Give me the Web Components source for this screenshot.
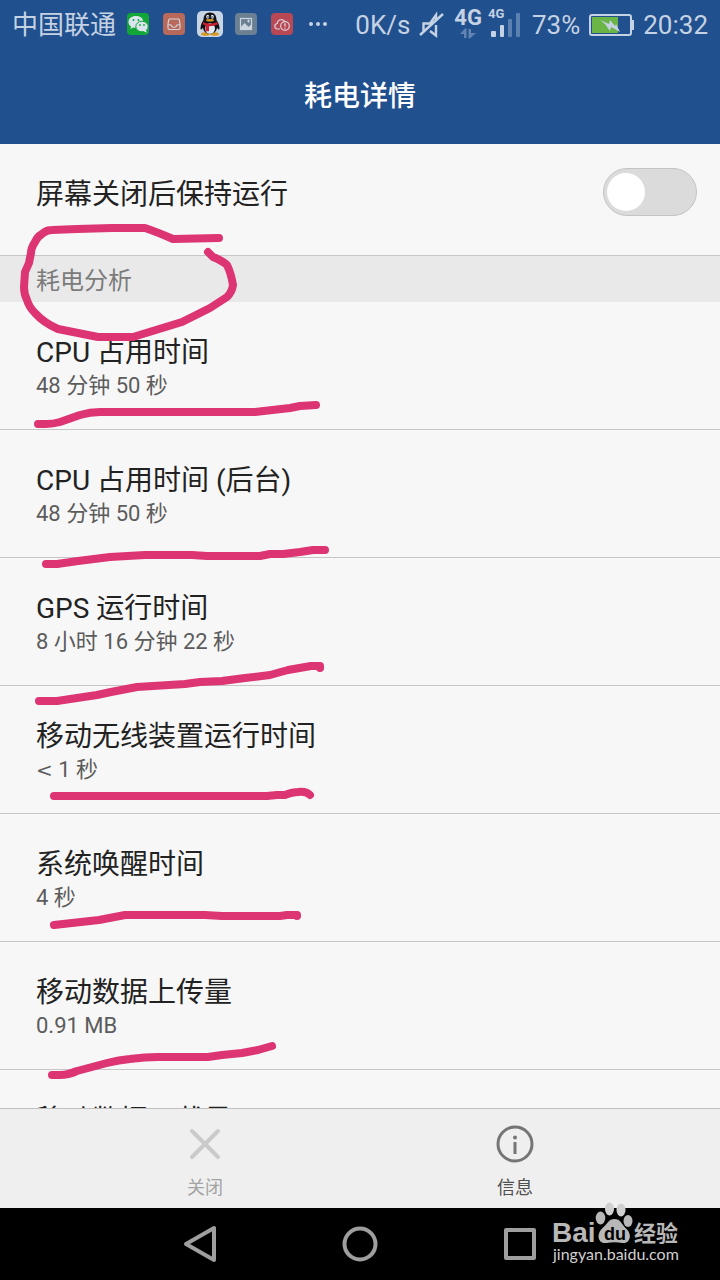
<!DOCTYPE html>
<html lang="zh-CN">
<head>
<meta charset="utf-8">
<meta name="viewport" content="width=device-width, initial-scale=1">
<title>耗电详情</title>
<style>
  html, body {
    margin: 0;
    height: 100%;
  }

  body {
    background: #f7f7f7;
    font-family: Roboto, "Noto Sans CJK SC", sans-serif;
    color: #222;
  }
</style>
</head>
<body>
<power-app></power-app>

<script>
class StatusBar extends HTMLElement {
  constructor() {
    super();
    this.attachShadow({ mode: "open" });
  }

  connectedCallback() {
    this.shadowRoot.innerHTML = `
      <style>
        :host {
          display: flex;
          align-items: center;
          justify-content: space-between;
          height: 46px;
          padding: 2px 12px 0;
          color: #c5d2e3;
          font-size: 26px;
          line-height: 46px;
          white-space: nowrap;
        }

        .left, .right {
          display: flex;
          align-items: center;
        }

        .right {
          gap: 9px;
        }

        .icons {
          display: flex;
          margin-left: 4px;
          padding-bottom: 2px;
        }

        svg {
          display: block;
        }

        .mobile {
          display: flex;
          align-items: center;
          gap: 6px;
          padding: 0 3px 4px 0;
        }

        .net {
          display: flex;
          flex-direction: column;
          align-items: center;
          font-size: 22px;
          font-weight: 700;
          line-height: 20px;
        }

        .signal {
          display: grid;
          font-size: 13px;
          font-weight: 700;
          line-height: 10px;
        }

        .signal > * {
          grid-area: 1 / 1;
        }
      </style>

      <div class="left">
        <span>中国联通</span>
        <div class="icons">
          <!-- WeChat -->
          <svg width="36" height="36" viewBox="0 0 36 36">
            <rect x="7" y="7" width="22" height="22" rx="4" fill="#12a537"/>
            <path d="M16 10c-4.500 0-7.500 2.600-7.500 6 0 2 1 3.500 2.700 4.600l-.8 2.500 3-1.500c4.500 1 10-1 10-5.600 0-3.400-3-6-7.400-6z" fill="#dbe5ee"/>
            <ellipse cx="22" cy="20.500" rx="6.200" ry="5.300" fill="#dbe5ee" stroke="#12a537"/>
            <path d="M23 25l3.800 1.800-.8-3z" fill="#dbe5ee"/>
            <g fill="#12a537"><circle cx="13.500" cy="14" r="1"/><circle cx="18.500" cy="14" r="1"/><circle cx="20" cy="19" r=".9"/><circle cx="24" cy="19" r=".9"/></g>
          </svg>
          <!-- Inbox -->
          <svg width="36" height="36" viewBox="0 0 36 36">
            <rect x="7" y="7" width="22" height="22" rx="4" fill="#b9695a"/>
            <path d="M14 13h8q1 0 1.300 1l.7 4v4q0 1.500-1.500 1.500h-9q-1.500 0-1.500-1.500v-4l.7-4q.3-1 1.300-1zM12 18.500l3 .5q1 2.500 3 2.500t3-2.500l3-.5" fill="none" stroke="#d3d3dc" stroke-width="1.200"/>
          </svg>
          <!-- QQ -->
          <svg width="36" height="36" viewBox="0 0 36 36">
            <rect x="5" y="5" width="26" height="26" rx="5" fill="#c8d5e4"/>
            <ellipse cx="13.500" cy="28" rx="4.500" ry="1.800" fill="#d99a22"/>
            <ellipse cx="22.500" cy="28" rx="4.500" ry="1.800" fill="#d99a22"/>
            <path d="M18 6.500c-4.500 0-6.500 3-6.500 7.500-1.500 2-3 5-3 8.500 0 2 1.500.8 2.500-.8.500 3.700 3 6 7 6s6.500-2.300 7-6c1 1.600 2.500 2.800 2.500.8 0-3.500-1.500-6.500-3-8.500 0-4.500-2-7.500-6.500-7.500z" fill="#101216"/>
            <ellipse cx="18" cy="22.500" rx="5" ry="5.200" fill="#e2e8ef"/>
            <ellipse cx="15.700" cy="10.800" rx="1.500" ry="2" fill="#e2e8ef"/>
            <ellipse cx="20.300" cy="10.800" rx="1.500" ry="2" fill="#e2e8ef"/>
            <circle cx="16" cy="11" r=".7"/><circle cx="20" cy="11" r=".7"/>
            <ellipse cx="18" cy="14.300" rx="4" ry="1.200" fill="#d99a22"/>
            <path d="M11 16q7 3.500 14 0l1 2.300q-4 2.200-9 2v5h-3.500v-6l-2.500-.8z" fill="#c92032"/>
          </svg>
          <!-- Picture -->
          <svg width="36" height="36" viewBox="0 0 36 36">
            <rect x="7" y="7" width="22" height="22" rx="4" fill="#6b8093"/>
            <rect x="12.500" y="12.500" width="11" height="11" fill="none" stroke="#ccd6e0" stroke-width="1.200"/>
            <path d="M13 21l3.500-4 4 4 2-2 1 1v4H13z" fill="#ccd6e0"/>
            <path d="M20.500 13.500v3M19 15h3" stroke="#ccd6e0"/>
          </svg>
          <!-- Cloud warning -->
          <svg width="36" height="36" viewBox="0 0 36 36">
            <rect x="7" y="7" width="22" height="22" rx="4" fill="#b94855"/>
            <path d="M16 23h-2.500c-3.500-.3-3.500-5-.3-5.500.2-4 6-5.500 8-1.500" fill="none" stroke="#dcd0da" stroke-width="1.200"/>
            <circle cx="21" cy="20" r="4.300" fill="#b94855" stroke="#dcd0da" stroke-width="1.200"/>
            <path d="M21 17.300v3.200M21 21.700v1" stroke="#dcd0da" stroke-width="1.400"/>
          </svg>
          <svg width="36" height="36" viewBox="0 0 36 36" fill="#c5d2e3">
            <circle cx="11" cy="18" r="2"/><circle cx="18" cy="18" r="2"/><circle cx="25" cy="18" r="2"/>
          </svg>
        </div>
      </div>

      <div class="right">
        <span>0K/s</span>
        <!-- Muted -->
        <svg width="26" height="28" viewBox="0 0 26 28" fill="none" stroke="#c5d2e3" stroke-width="2.400">
          <path d="M4.500 20v-7.500H11L17 4v5M11 20l6 4.500V14M1 24L24 3"/>
        </svg>
        <div class="mobile">
          <span class="net">4G
            <svg width="18" height="11" viewBox="0 0 18 11" fill="#6284b2">
              <path d="M1 6l5-5.500h1.500V10H5V6zM17 5l-6 5.500H9.500V1H12v4z"/>
            </svg>
          </span>
          <div class="signal">
            <span>4G</span>
            <svg width="32" height="28" viewBox="0 0 32 28" fill="#c5d2e3">
              <rect x="3" y="22" width="5" height="6" rx="1"/>
              <rect x="12" y="16" width="4" height="12" rx="1"/>
              <rect x="20" y="10" width="4" height="18" rx="1" fill="#5c80b0"/>
              <rect x="28" y="4" width="4" height="24" rx="1" fill="#5c80b0"/>
            </svg>
          </div>
        </div>
        <span>73%</span>
        <!-- Charging battery -->
        <svg width="45" height="24" viewBox="0 0 45 24">
          <rect x="1" y="2" width="41" height="20" rx="2" fill="none" stroke="#c5d2e3" stroke-width="2"/>
          <path d="M43 7h2v10h-2z" fill="#c5d2e3"/>
          <rect x="3" y="4" width="26" height="16" fill="#6ab546"/>
          <path d="M11 7l9 4 1-4 5 6 1-2 4 8-9-5-1 4-5-7z" fill="#c5d2e3"/>
        </svg>
        <span>20:32</span>
      </div>
    `;
  }
}

class PageHeader extends HTMLElement {
  constructor() {
    super();
    this.attachShadow({ mode: "open" });
    this.shadowRoot.innerHTML = `
      <style>
        :host {
          display: block;
          flex: none;
          background: #20508e;
        }

        h1 {
          margin: 0;
          padding-top: 2px;
          color: #fff;
          font-size: 28px;
          font-weight: 500;
          line-height: 94px;
          text-align: center;
        }
      </style>
      <status-bar></status-bar>
      <h1><slot></slot></h1>
    `;
  }
}

class SwitchRow extends HTMLElement {
  constructor() {
    super();
    this.attachShadow({ mode: "open" });
    this.shadowRoot.innerHTML = `
      <style>
        :host {
          display: flex;
          align-items: flex-start;
          justify-content: space-between;
          padding: 24px 23px 33px 36px;
          border-bottom: 1px solid #c6c6c6;
        }

        label {
          font-size: 28px;
          line-height: 54px;
        }

        input {
          appearance: none;
          flex: none;
          box-sizing: border-box;
          width: 94px;
          height: 48px;
          margin: 0;
          padding: 4px 3px;
          border: 1px solid #c4c4c4;
          border-radius: 24px;
          background: #dbdbdb;
        }

        input::before {
          content: "";
          display: block;
          width: 38px;
          height: 38px;
          border-radius: 50%;
          background: #fff;
        }

        input:checked {
          background: #20508e;
        }

        input:checked::before {
          margin-left: auto;
        }
      </style>
      <label for="toggle"><slot></slot></label>
      <input type="checkbox" id="toggle" role="switch">
    `;
  }
}

class SectionTitle extends HTMLElement {
  constructor() {
    super();
    this.attachShadow({ mode: "open" });
    this.shadowRoot.innerHTML = `
      <style>
        :host {
          display: block;
          background: #e9e9e9;
        }

        h2 {
          margin: 0;
          padding: 4px 36px 0;
          color: #7b7b7b;
          font-size: 24px;
          font-weight: 400;
          line-height: 42px;
        }
      </style>
      <h2><slot></slot></h2>
    `;
  }
}

class StatRow extends HTMLElement {
  constructor() {
    super();
    this.attachShadow({ mode: "open" });
    this.shadowRoot.innerHTML = `
      <style>
        :host {
          display: block;
          padding: 34px 36px 26px;
          border-bottom: 1px solid #c6c6c6;
        }

        div {
          font-size: 28px;
          line-height: 33px;
        }

        .value {
          color: #5c5c5c;
          font-size: 22px;
          line-height: 34px;
        }
      </style>
      <div><slot></slot></div>
      <div class="value"><slot name="value"></slot></div>
    `;
  }
}

class ToolBar extends HTMLElement {
  constructor() {
    super();
    this.attachShadow({ mode: "open" });
    this.shadowRoot.innerHTML = `
      <style>
        :host {
          display: flex;
          flex: none;
          justify-content: center;
          border-top: 1px solid #c0c0c0;
          background: #efefef;
        }

        button {
          display: flex;
          flex: 0 1 310px;
          flex-direction: column;
          align-items: center;
          gap: 11px;
          padding: 15px 0 7px;
          border: 0;
          background: none;
          color: #505050;
          font: inherit;
          font-size: 18px;
          line-height: 26px;
        }

        button:disabled {
          color: #a3a3a3;
        }
      </style>
      <button disabled>
        <svg width="40" height="40" viewBox="0 0 40 40" stroke="#cacaca" stroke-width="4" stroke-linecap="round">
          <path d="M7 7l26 26M33 7L7 33"/>
        </svg>
        关闭
      </button>
      <button>
        <svg width="40" height="40" viewBox="0 0 40 40" fill="none" stroke="#757575" stroke-width="3">
          <circle cx="20" cy="20" r="17"/>
          <path d="M20 18v12"/>
          <circle cx="20" cy="13.500" r="2" fill="#757575" stroke="none"/>
        </svg>
        信息
      </button>
    `;
  }
}

class NavBar extends HTMLElement {
  constructor() {
    super();
    this.attachShadow({ mode: "open" });
    this.shadowRoot.innerHTML = `
      <style>
        :host {
          display: flex;
          flex: none;
          justify-content: center;
          background: #000;
        }

        button {
          flex: 0 1 160px;
          padding: 16px 0;
          border: 0;
          background: none;
        }

        svg {
          display: block;
          margin: 0 auto;
          fill: none;
          stroke: #9e9e9e;
          stroke-width: 4;
          stroke-linejoin: round;
        }
      </style>
      <button aria-label="返回"><svg width="40" height="40"><path d="M34 4v32L6 20z"/></svg></button>
      <button aria-label="主页"><svg width="40" height="40"><circle cx="20" cy="20" r="15.500"/></svg></button>
      <button aria-label="最近任务"><svg width="40" height="40"><rect x="6" y="6" width="28" height="28"/></svg></button>
    `;
  }
}

// Pen marks drawn over the list
class InkLayer extends HTMLElement {
  constructor() {
    super();
    this.attachShadow({ mode: "open" });
    this.shadowRoot.innerHTML = `
      <style>
        :host {
          position: absolute;
          top: 0;
          left: 0;
          pointer-events: none;
        }

        svg {
          display: block;
          fill: none;
          stroke: #dd3474;
          stroke-width: 8;
          stroke-linecap: round;
          stroke-linejoin: round;
        }
      </style>
      <svg width="360" height="1100" viewBox="0 0 360 1100">
        <path d="M219 238L173 239Q157 232 145 228H112L77 229L52 230Q46 230 42 234Q37 237 35 242Q31 248 31 253L29 263L25 272L24 287Q24 294 27 300Q29 307 35 313Q44 323 58 329L98 337H133L182 322L210 308L227 297Q232 292 233 285Q231 273 227 265Q223 261 213 257L208 252"/>
        <path d="M38 424H46Q53 424 60 422L80 415Q90 412 100 412H255L290 408L300 406L316 405"/>
        <path d="M46 564H57L78 561L110 557L145 555H192L207 556H260L270 554H283L300 552L313 550H325"/>
        <path d="M39 701H57L97 695L111 692L137 687L185 684L200 682L222 681L245 678L270 675L288 670L311 666H320V668"/>
        <path d="M54 796H267L277 795H285Q293 792 298 792Q306 791 310 795"/>
        <path d="M54 925L99 920L125 915H205L222 916H280L287 915H297V916"/>
        <path d="M52 1075H60Q68 1075 77 1071L107 1063Q119 1060 130 1059Q145 1057 158 1057H208L222 1055L242 1053L258 1050L272 1046"/>
      </svg>
    `;
  }
}

class SiteBadge extends HTMLElement {
  constructor() {
    super();
    this.attachShadow({ mode: "open" });
    this.shadowRoot.innerHTML = `
      <style>
        :host {
          position: absolute;
          right: 36px;
          bottom: 10px;
          pointer-events: none;
        }

        svg {
          display: block;
        }

        .logo {
          font-family: "Liberation Sans", sans-serif;
          font-weight: 700;
        }

        .cjk {
          font-family: "Noto Sans CJK SC", sans-serif;
          font-weight: 700;
        }

        .url {
          font-family: Lato, sans-serif;
        }
      </style>
      <svg width="132" height="70" viewBox="0 0 132 70" fill="#b8b8b8">
        <ellipse cx="48.500" cy="18" rx="4.800" ry="6.500"/>
        <ellipse cx="57.500" cy="9" rx="4.500" ry="6.500" fill="#d0d0d0"/>
        <ellipse cx="69" cy="10" rx="4.500" ry="6.500" fill="#d0d0d0"/>
        <ellipse cx="76" cy="21" rx="4.500" ry="6"/>
        <path d="M62.500 19c6 0 7 5 11 9 8 7 4 16-3 15-5-1-11-1-16 0-8 1-11-8-4-15 5-4 6-9 12-9z"/>
        <text class="logo" x="0" y="42" font-size="28">Bai</text>
        <text class="logo" x="52" y="40" font-size="18" style="fill:#000">du</text>
        <text class="cjk" x="82" y="41" font-size="22">经验</text>
        <text class="url" x="1" y="60" font-size="16" style="fill:#d0d0d0">jingyan.baidu.com</text>
      </svg>
    `;
  }
}

class PowerApp extends HTMLElement {
  constructor() {
    super();
    this.attachShadow({ mode: "open" });

    this.stats = [
      { name: "CPU 占用时间", value: "48 分钟 50 秒" },
      { name: "CPU 占用时间 (后台)", value: "48 分钟 50 秒" },
      { name: "GPS 运行时间", value: "8 小时 16 分钟 22 秒" },
      { name: "移动无线装置运行时间", value: `<span class="sign">&lt;</span> 1 秒` },
      { name: "系统唤醒时间", value: "4 秒" },
      { name: "移动数据上传量", value: "0.91 MB" },
      { name: "移动数据下载量", value: "" }
    ];
  }

  connectedCallback() {
    this.shadowRoot.innerHTML = `
      <style>
        :host {
          display: flex;
          flex-direction: column;
          position: relative;
          height: 100vh;
          overflow: hidden;
        }

        main {
          flex: 1;
          min-height: 0;
          overflow: hidden;
        }

        .sign {
          font-family: "DejaVu Sans", sans-serif;
          font-size: 20px;
          line-height: 1;
        }
      </style>
      <page-header>耗电详情</page-header>
      <main>
        <switch-row>屏幕关闭后保持运行</switch-row>
        <section-title>耗电分析</section-title>
        ${this.stats.map(s => `
          <stat-row>${s.name}<span slot="value">${s.value}</span></stat-row>
        `).join("")}
      </main>
      <tool-bar></tool-bar>
      <nav-bar></nav-bar>
      <ink-layer></ink-layer>
      <site-badge></site-badge>
    `;
  }
}

customElements.define("status-bar", StatusBar);
customElements.define("page-header", PageHeader);
customElements.define("switch-row", SwitchRow);
customElements.define("section-title", SectionTitle);
customElements.define("stat-row", StatRow);
customElements.define("tool-bar", ToolBar);
customElements.define("nav-bar", NavBar);
customElements.define("ink-layer", InkLayer);
customElements.define("site-badge", SiteBadge);
customElements.define("power-app", PowerApp);
</script>
</body>
</html>
